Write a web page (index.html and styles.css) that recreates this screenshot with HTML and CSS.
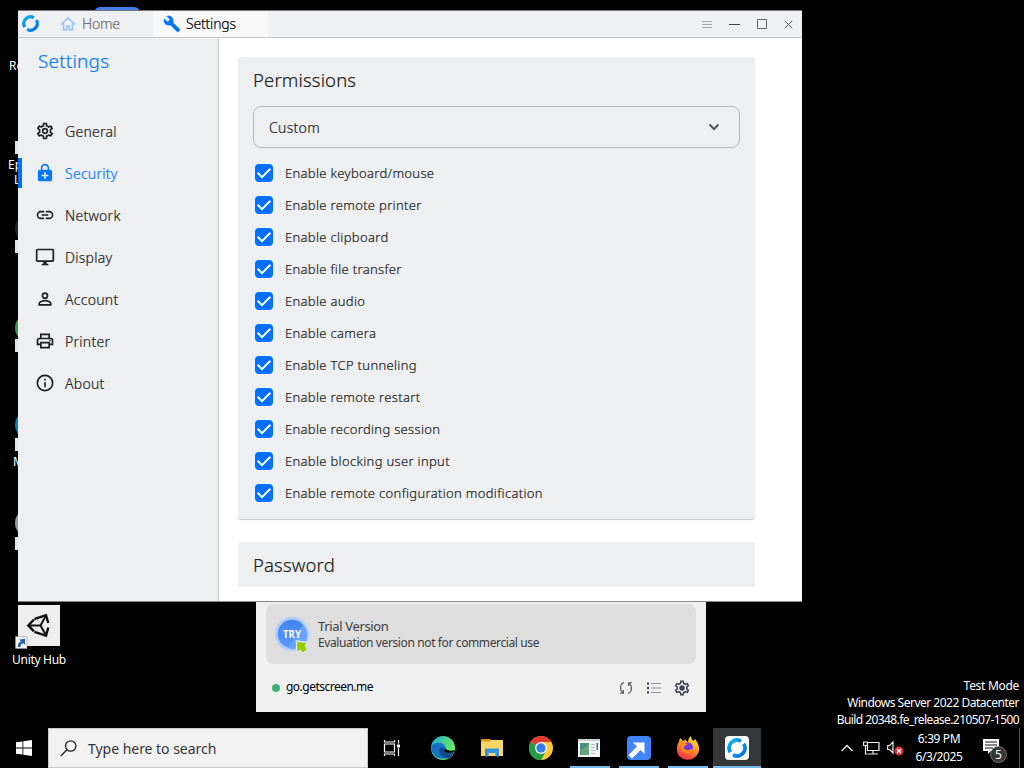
FILE: index.html
```html
<!DOCTYPE html>
<html lang="en">
<head>
<meta charset="utf-8">
<title>Settings</title>
<link rel="stylesheet" href="styles.css">
</head>
<body>
<svg class="defs" width="0" height="0" aria-hidden="true">
  <defs>
    <linearGradient id="ring" x1="0" y1="0" x2="1" y2="1"><stop offset="0" stop-color="#00bde9"/><stop offset="1" stop-color="#0866e5"/></linearGradient>
    <linearGradient id="tryfill" x1="0" y1="0" x2="0" y2="1"><stop offset="0" stop-color="#4084ed"/><stop offset="1" stop-color="#5b9aff"/></linearGradient>
    <linearGradient id="edge" x1="0" y1="0" x2="1" y2=".4"><stop offset="0" stop-color="#20a9df"/><stop offset="1" stop-color="#6bea5b"/></linearGradient>
    <linearGradient id="fox" x1=".8" y1="0" x2=".3" y2="1"><stop offset="0" stop-color="#fff044"/><stop offset=".45" stop-color="#ff9a1e"/><stop offset="1" stop-color="#f5264f"/></linearGradient>
    <symbol id="rust" viewBox="0 0 24 24"><g fill="none" stroke="url(#ring)" stroke-width="4.400"><path d="M3.400 16.200A9.600 9.600 0 0 1 16 3.300"/><path d="M20.600 7.800A9.600 9.600 0 0 1 8 20.700"/></g><path d="M14.500 1.500 18 2 15 6.500ZM1.500 14.500 2 18.500 6.500 15ZM22.500 9.500 22 5.500 17.500 9ZM9.500 22.500 6 22 9 17.500Z" fill="#078bea"/></symbol>
    <symbol id="check" viewBox="0 0 18 18"><path d="M2.600 8.800 7 13.100 15.400 4.700" fill="none" stroke="#fff" stroke-width="2"/></symbol>
    <symbol id="gear" viewBox="0 0 24 24"><path d="M19.43 12.98c.04-.32.07-.64.07-.98s-.03-.66-.07-.98l2.11-1.65c.19-.15.24-.42.12-.64l-2-3.46a.5.5 0 0 0-.61-.22l-2.49 1c-.52-.4-1.08-.73-1.69-.98l-.38-2.65A.49.49 0 0 0 14 2h-4c-.25 0-.46.18-.49.42l-.38 2.65c-.61.25-1.17.59-1.69.98l-2.49-1a.5.5 0 0 0-.61.22l-2 3.46c-.13.22-.07.49.12.64l2.11 1.65c-.04.32-.07.65-.07.98s.03.66.07.98l-2.11 1.65c-.19.15-.24.42-.12.64l2 3.46c.12.22.39.3.61.22l2.49-1c.52.4 1.08.73 1.69.98l.38 2.65c.03.24.24.42.49.42h4c.25 0 .46-.18.49-.42l.38-2.65c.61-.25 1.17-.59 1.69-.98l2.49 1c.23.09.49 0 .61-.22l2-3.46c.12-.22.07-.49-.12-.64zM17.45 11.27c.04.31.05.52.05.73s-.02.43-.05.73l-.14 1.13.89.7 1.08.84-.7 1.21-1.27-.51-1.04-.42-.9.68c-.43.32-.84.56-1.25.73l-1.06.43-.16 1.13-.2 1.35h-1.4l-.35-2.48-1.06-.43c-.43-.18-.83-.41-1.23-.71l-.91-.7-1.06.43-1.27.51-.7-1.21 1.97-1.54-.14-1.13a7 7 0 0 1 0-1.47l.14-1.13-1.97-1.54.7-1.21 1.27.51 1.04.42.9-.68c.43-.32.84-.56 1.25-.73l1.06-.43.35-2.48h1.39l.35 2.48 1.06.43c.43.18.83.41 1.23.71l.91.7 1.06-.43 1.27-.51.7 1.21-1.97 1.54z" fill="currentColor" fill-rule="evenodd"/></symbol>
  </defs>
</svg>
<main class="desktop">
  <div class="back-tab"></div>
  <span class="peek p1">Re</span>
  <span class="peek p2">Ep</span>
  <span class="peek p3">L</span>
  <span class="peek p4">M</span>
  <i class="bar b1"></i><i class="bar b2"></i><i class="bar b3"></i><i class="bar b4"></i><i class="bar b5"></i>
  <i class="disc d1"></i><i class="disc d2"></i><i class="disc d3"></i><i class="disc d4"></i>

  <div class="shortcut">
    <svg width="60" height="46" viewBox="0 0 60 46"><path fill="#eee" d="M9 2h42v41H9z"/><g fill="none" stroke="#111" stroke-width="2.400"><path d="M25.500 16 37 12.200 39.300 20M39.300 24.500 37 32.600 25.500 28.800M25 16.500 19.300 22.400 25 28.300"/><path d="M19.500 22.400H31.500L37 12.500M31.500 22.400 37 32.300" stroke-width="2"/></g><path fill="#f3f3f3" stroke="#999" stroke-width=".6" d="M6.500 33.500h11.500v12H6.500z"/><path d="M9 44c-.5-3 .5-5 3-5.600l-1.600-2 5.600-.6v6l-1.800-1.600c-2 .5-3 1.800-2.500 3.800z" fill="#2860ae"/></svg>
    <span>Unity Hub</span>
  </div>

  <section class="trial">
    <div class="trial-card">
      <svg width="36" height="40" viewBox="0 0 36 40"><circle cx="17" cy="19" r="17" fill="#b0ccfb"/><circle cx="17" cy="19" r="14.200" fill="url(#tryfill)"/><path d="M13 33 28 10A14 14 0 0 1 13 33" fill="#6ba2fb"/><text class="try" x="17" y="23" text-anchor="middle" textLength="18" lengthAdjust="spacingAndGlyphs">TRY</text><path d="m21.500 26 11 1.500-2 3 2 4.500-5 3.500-2-3-4 1.500z" fill="#94cf05" stroke="#dfe9ef" stroke-width="1.300"/></svg>
      <div><p class="t1">Trial Version</p><p class="t2">Evaluation version not for commercial use</p></div>
    </div>
    <div class="trial-foot">
      <i class="online"></i><span class="host">go.getscreen.me</span>
      <svg class="f-sync" width="14" height="14" viewBox="0 0 14 14" fill="none" stroke="#555" stroke-width="1.100"><path d="M5 1.500C1 3 .2 8.500 4 12M1 12.300h3.400V9M9 12.500c4-1.500 4.800-7 1-10.500M13 1.700H9.600V5"/></svg>
      <svg width="14" height="12" viewBox="0 0 14 12" stroke="#8a8e99" stroke-width="1.200"><path d="M0 1.500h2M0 6h2M0 10.500h2" stroke="#34384a" stroke-width="2"/><path d="M4 1.500h10M4 6h10M4 10.500h10"/></svg>
      <svg width="18" height="18" viewBox="0 0 24 24" color="#3d4355"><use href="#gear"/><circle cx="12" cy="12" r="3.600" fill="#3d4355"/></svg>
    </div>
  </section>

  <section class="window">
    <header class="titlebar">
      <svg class="logo" width="17" height="17"><use href="#rust"/></svg>
      <div class="tab home"><svg width="16" height="16" viewBox="0 0 16 16" fill="none" stroke="#9dc7f5" stroke-width="1.700"><path d="M1 8.500 8 2l7 6.500M3.500 7v7h3.200v-4h2.600v4h3.200V7"/></svg><span>Home</span></div>
      <div class="tab active"><svg width="18" height="18" viewBox="0 0 24 24"><path fill="#0878f9" d="m22.700 19-9.100-9.100c.9-2.300.4-5-1.500-6.900-2-2-5-2.400-7.400-1.300L9 6 6 9 1.600 4.700C.4 7.100.9 10.100 2.900 12.100c1.900 1.900 4.600 2.400 6.900 1.500l9.100 9.100c.4.400 1 .4 1.400 0l2.300-2.300c.5-.4.5-1.100.1-1.400z"/></svg><span>Settings</span></div>
      <div class="controls">
        <svg width="10" height="10" viewBox="0 0 10 10" stroke="#aaa"><path d="M0 2.500h10M0 5.500h10M0 8.500h10"/></svg>
        <svg width="11" height="10" viewBox="0 0 11 10" stroke="#444"><path d="M0 5.500h11"/></svg>
        <svg width="10" height="10" viewBox="0 0 10 10" stroke="#666" fill="none"><path d="M.5.500h9v9h-9z"/></svg>
        <svg width="9" height="9" viewBox="0 0 9 9" stroke="#555"><path d="m.8.800 7.400 7.400m0-7.400L.8 8.200"/></svg>
      </div>
    </header>
    <div class="body">
      <nav class="side">
        <h1>Settings</h1>
        <a class="item"><svg viewBox="0 0 24 24"><use href="#gear"/><circle cx="12" cy="12" r="2.800" fill="none" stroke="currentColor" stroke-width="2"/></svg><span>General</span></a>
        <a class="item on"><svg viewBox="0 0 24 24"><path fill="currentColor" fill-rule="evenodd" d="M18.500 8H17V6A5 5 0 0 0 7 6v2H5.500a2 2 0 0 0-2 2v10c0 1.100.9 2 2 2h13a2 2 0 0 0 2-2V10a2 2 0 0 0-2-2zM8.900 6a3.100 3.100 0 0 1 6.200 0v2H8.900zM16 16h-3v3h-2v-3H8v-2h3v-3h2v3h3z"/></svg><span>Security</span></a>
        <a class="item"><svg viewBox="0 0 24 24"><path fill="currentColor" d="M3.900 12A3.100 3.100 0 0 1 7 8.900h4V7H7a5 5 0 0 0 0 10h4v-1.900H7A3.100 3.100 0 0 1 3.900 12zM8 13h8v-2H8zm9-6h-4v1.900h4a3.100 3.100 0 0 1 0 6.200h-4V17h4a5 5 0 0 0 0-10z"/></svg><span>Network</span></a>
        <a class="item"><svg viewBox="0 0 24 24"><path fill="currentColor" fill-rule="evenodd" d="M21 2H3a2 2 0 0 0-2 2v12c0 1.100.9 2 2 2h7v2H8v2h8v-2h-2v-2h7a2 2 0 0 0 2-2V4a2 2 0 0 0-2-2zm0 14H3V4h18z"/></svg><span>Display</span></a>
        <a class="item"><svg viewBox="0 0 24 24" fill="none" stroke="currentColor" stroke-width="2"><circle cx="12" cy="8" r="3"/><path d="M5 19v-1.500c0-2 4-3.500 7-3.500s7 1.500 7 3.500V19z"/></svg><span>Account</span></a>
        <a class="item"><svg viewBox="0 0 24 24"><path fill="currentColor" fill-rule="evenodd" d="M19 8h-1V3H6v5H5a3 3 0 0 0-3 3v6h4v4h12v-4h4v-6a3 3 0 0 0-3-3zM8 5h8v3H8zm8 14H8v-4h8zm2-4v-2H6v2H4v-4a1 1 0 0 1 1-1h14a1 1 0 0 1 1 1v4z"/><circle cx="18" cy="11.500" r="1" fill="currentColor"/></svg><span>Printer</span></a>
        <a class="item"><svg viewBox="0 0 24 24"><circle cx="12" cy="12" r="9.200" fill="none" stroke="currentColor" stroke-width="2"/><path fill="currentColor" d="M11 7h2v2h-2zm0 4h2v6h-2z"/></svg><span>About</span></a>
      </nav>
      <div class="content">
        <div class="card">
          <h2>Permissions</h2>
          <div class="select"><span>Custom</span><svg width="12" height="8" viewBox="0 0 12 8"><path d="m1.500 1.500 4.500 4.500 4.500-4.500" fill="none" stroke="#55585b" stroke-width="2"/></svg></div>
          <div class="options">
            <label><svg class="box"><use href="#check"/></svg><span>Enable keyboard/mouse</span></label>
            <label><svg class="box"><use href="#check"/></svg><span>Enable remote printer</span></label>
            <label><svg class="box"><use href="#check"/></svg><span>Enable clipboard</span></label>
            <label><svg class="box"><use href="#check"/></svg><span>Enable file transfer</span></label>
            <label><svg class="box"><use href="#check"/></svg><span>Enable audio</span></label>
            <label><svg class="box"><use href="#check"/></svg><span>Enable camera</span></label>
            <label><svg class="box"><use href="#check"/></svg><span>Enable TCP tunneling</span></label>
            <label><svg class="box"><use href="#check"/></svg><span>Enable remote restart</span></label>
            <label><svg class="box"><use href="#check"/></svg><span>Enable recording session</span></label>
            <label><svg class="box"><use href="#check"/></svg><span>Enable blocking user input</span></label>
            <label><svg class="box"><use href="#check"/></svg><span>Enable remote configuration modification</span></label>
          </div>
        </div>
        <div class="card second"><h2>Password</h2></div>
      </div>
    </div>
  </section>

  <div class="watermark"><p class="w1">Test Mode</p><p class="w2">Windows Server 2022 Datacenter</p><p class="w3">Build 20348.fe_release.210507-1500</p></div>

  <footer class="taskbar">
    <div class="start"><svg width="16" height="16" viewBox="0 0 16 16"><path fill="#fff" d="M0 2.300 6.500 1.400v6.200H0zM7.300 1.300 16 0v7.600H7.300zM0 8.400h6.500v6.200L0 13.700zM7.300 8.400H16V16l-8.700-1.300z"/></svg></div>
    <div class="search"><svg width="17" height="17" viewBox="0 0 17 17" fill="none" stroke="#222" stroke-width="1.300"><circle cx="10.700" cy="6" r="5.200"/><path d="M7 9.700.7 16"/></svg><span>Type here to search</span></div>
    <div class="app view"><svg width="18" height="16" viewBox="0 0 18 16" fill="none" stroke="#fff" stroke-width="1.200"><path d="M1.500 4h10v8h-10zM1.500 0v2h10V0M1.500 16v-2h10v2M15.500 0v3.500M15.500 8v8"/><path fill="#fff" stroke="none" d="M14 4.500h3v3h-3z"/></svg></div>
    <div class="app"><svg width="24" height="24" viewBox="0 0 24 24"><circle cx="12" cy="12" r="12" fill="url(#edge)"/><path d="M.2 11C2 6 12 5 14.500 11c.5 2-2 3-1 4.500 2 2.500 6.500 2 9.500.5A12 12 0 0 1 .2 11" fill="#1672c4"/><path d="M8.500 13c-1 5 3.500 9.500 9 9.500A12 12 0 0 0 23 16c-6 3-11 0-9.500-3-2-2.500-4-2-5 0" fill="#114a8b"/><path d="M13.500 11.500c1.300 1.500-1 2.500 0 4 1.700 2 6 2 9.500.5l.8-2c-3 1.300-8 1-10.300-2.500" fill="#02070c"/></svg></div>
    <div class="app"><svg width="22" height="18" viewBox="0 0 22 18"><path d="M0 0h9l1 1h12v16H0z" fill="#fbd669"/><path d="M0 0h9l1.500 2.500H0z" fill="#dc9a18"/><path d="M4 17.500V9.500h14v8h-3.500V14h-7v3.500z" fill="#3595dc"/></svg></div>
    <div class="app"><svg width="24" height="24" viewBox="0 0 24 24"><circle cx="12" cy="12" r="12" fill="#fcc934"/><path d="M12 12 1.600 6A12 12 0 0 1 22.400 6H12z" fill="#e33b2e"/><path d="M1.600 6A12 12 0 0 0 12 24l5.200-9L12 12z" fill="#259b48"/><circle cx="12" cy="12" r="6" fill="#fff"/><circle cx="12" cy="12" r="4.700" fill="#347ce8"/></svg></div>
    <div class="app run"><svg class="server" width="22" height="18" viewBox="0 0 22 18"><path fill="#f5f5f5" d="M0 0h22v18H0z"/><path d="M0 0h22v2H0z" fill="#ccd0d2"/><path d="M2 4h9v12H2z" fill="#468f7d"/><path d="M3 10c5 0 6-5 8-5v11H3z" fill="#66a67a"/><path d="M13 5.500h4M13 8.500h4M13 11.500h4M13 14.500h4" stroke="#bbb"/><path d="M18.500 4H20v7h-1.500z" fill="#237e9e"/></svg></div>
    <div class="app run"><svg width="24" height="24" viewBox="0 0 24 24"><rect width="24" height="24" rx="4" fill="#4285f8"/><path d="M6 6.500h11.500V18l-4-4L5 22.500 1.500 19 10 10.500z" fill="#fff"/></svg></div>
    <div class="app run"><svg width="24" height="24" viewBox="0 0 24 24"><path d="M3 6C3 4 4 2.500 4.500 2l2.500 3 3-1.500C10 5 11 6 12 6c0-2 1-4.500 3-6 0 2.500 1 3.500 2.500 5L19 3c4 5 6 11 2 16-5 7-15 6-19-.5C0 14 1 8 3 6" fill="url(#fox)"/><circle cx="12" cy="11.500" r="5" fill="#713bd0"/><path d="M3 6c4-2 6 1 8 2 0 2-4 1-3 4s6 3 8 0c1 7-10 7-11 0z" fill="#ff8820"/></svg></div>
    <div class="app run current"><span><svg width="20" height="20"><use href="#rust"/></svg></span></div>
    <div class="tray">
      <svg width="12" height="8" viewBox="0 0 12 8" fill="none" stroke="#eee" stroke-width="1.400"><path d="m.6 7 5.400-5.400L11.400 7"/></svg>
      <svg class="net" width="17" height="14" viewBox="0 0 17 14" fill="none" stroke="#eee" stroke-width="1.200"><path d="M5 1.500h11v8H4.500V4M10 9.500v3M5 13h10M.6 1h3.800v3.500H.6zM2.500 4.500V13h2"/></svg>
      <svg class="vol" width="17" height="16" viewBox="0 0 17 16"><path d="M.7 5.500h2L6 2v11L2.700 9.500h-2z" fill="none" stroke="#eee" stroke-width="1.200"/><circle cx="12" cy="11" r="4.500" fill="#d7323a"/><path d="m10 9 4 4m0-4-4 4" stroke="#fff" stroke-width="1.100"/></svg>
      <div class="clock"><span class="time">6:39 PM</span><span class="date">6/3/2025</span></div>
      <svg class="note" width="26" height="26" viewBox="0 0 26 26"><path d="M1 1h16v12H9l-3 3v-3H1z" fill="#fff"/><path d="M3 4h12M3 7h12M3 10h8" stroke="#111" stroke-width="1.200"/><circle cx="16.500" cy="16.500" r="8" fill="#353535" stroke="#888" stroke-width=".8"/><text class="count" x="16.500" y="21" text-anchor="middle">5</text></svg>
    </div>
  </footer>
</main>
</body>
</html>
```
FILE: styles.css
```css
* { box-sizing: border-box; }
body { margin: 0; background: #000; font-family: "Noto Sans", "Open Sans", sans-serif; }
h1, h2, p { margin: 0; font-weight: inherit; }
svg { display: block; flex: none; }
span, p, h1, h2 { white-space: nowrap; }
.defs { position: absolute; }
.desktop { position: relative; width: 1024px; height: 768px; overflow: hidden; background: #000; }

/* Desktop items that show beside the window's left edge */
.back-tab { position: absolute; left: 94px; top: 7px; width: 46px; height: 12px; border-radius: 7px; background: #3f80ee; }
.peek { position: absolute; color: #fff; font-size: 12px; line-height: 14px; }
.p1 { left: 9px; top: 59px; }
.p2 { left: 8px; top: 158px; }
.p3 { left: 14px; top: 173px; }
.p4 { left: 13px; top: 455px; }
.bar { position: absolute; left: 15px; width: 4px; height: 13px; background: #e4e4e4; }
.b1 { top: 141px; } .b2 { top: 240px; } .b3 { top: 339px; } .b4 { top: 438px; } .b5 { top: 537px; }
.disc { position: absolute; left: 15px; width: 28px; height: 28px; border-radius: 50%; }
.d1 { top: 215px; background: #222; } .d2 { top: 314px; background: #35994b; } .d3 { top: 411px; background: #0c78bd; } .d4 { top: 509px; background: #999; }
.shortcut { position: absolute; left: 9px; top: 603px; width: 60px; display: flex; flex-direction: column; align-items: center; color: #fff; font-size: 12px; line-height: 20px; }
.shortcut span { margin-top: 1px; letter-spacing: -.3px; }

/* Trial window */
.trial { position: absolute; left: 256px; top: 600px; width: 450px; height: 112px; padding: 4px 10px 0; background: #f0f0f0; }
.trial-card { display: flex; gap: 7px; align-items: center; height: 60px; padding: 0 9px; border-radius: 8px; background: #dedede; color: #3c3c3c; }
.trial-card svg { margin-top: 2px; }
.t1 { font-size: 13px; line-height: 17px; letter-spacing: -.35px; }
.t2 { font-size: 12px; line-height: 16px; letter-spacing: -.38px; }
.try { fill: #fff; font: 700 11px "Open Sans", sans-serif; }
.trial-foot { display: flex; align-items: center; height: 48px; padding: 0 5px 0 6px; font-size: 12px; }
.online { width: 8px; height: 8px; border-radius: 50%; background: #3cb371; margin-right: 6px; }
.host { color: #000; line-height: 16px; margin-top: -3px; margin-right: auto; letter-spacing: -.52px; }
.trial-foot svg { margin-top: 0; }
.trial-foot svg + svg { margin-left: 12px; }
.trial-foot .f-sync + svg { margin-left: 14px; }

/* Settings window */
.window { position: absolute; left: 18px; top: 10px; width: 784px; height: 592px; border-top: 1px solid #777; border-bottom: 1px solid #888; background: #fff; overflow: hidden; font-weight: 300; -webkit-text-stroke: .2px currentColor; }
.titlebar { display: flex; height: 27px; background: #eff0f2; border-bottom: 1px solid #c6c7c9; }
.logo { margin: 4px 0 0 4px; width: 17px; }
.tab { display: flex; align-items: center; height: 26px; font-size: 14px; }
.tab span { line-height: 18px; margin-top: -1px; }
.home { width: 96px; margin-left: 13px; padding-left: 8px; gap: 6px; color: #6d6d6d; }
.home span { letter-spacing: -.2px; }
.active { width: 115px; margin-left: 5px; padding-left: 10px; gap: 5px; background: #f8f8f9; color: #000; }
.active span { letter-spacing: -.2px; }
.controls { display: flex; align-items: center; gap: 17px; margin-left: auto; padding-right: 9px; }
.body { display: flex; height: 563px; }
.side { width: 201px; background: #eeeff1; border-right: 1px solid #c9cacd; color: #1c1e20; }
.side h1 { height: 72px; padding: 9px 0 0 20px; color: #0877f3; font-size: 19px; line-height: 28px; letter-spacing: .18px; }
.item { display: flex; align-items: center; height: 42px; padding-left: 17px; gap: 10px; font-size: 14px; letter-spacing: .27px; }
.item svg { width: 20px; height: 20px; }
.on { padding-left: 13px; color: #0877f3; }
.on::before { content: ""; width: 4px; height: 30px; margin-left: -13px; background: #0071ff; }
.on svg { margin-left: 3px; }
.content { flex: 1; padding: 19px 47px 0 19px; }
.card { height: 462px; padding: 9px 15px 0; border-radius: 4px; background: #eeeff1; box-shadow: 0 1px 1px #c6c6c6; }
.card h2 { color: #1c1e20; font-size: 18.500px; line-height: 28px; letter-spacing: .15px; }
.second { height: 45px; margin-top: 23px; border-radius: 4px 4px 0 0; box-shadow: none; }
.select { display: flex; align-items: center; justify-content: space-between; height: 42px; margin-top: 12px; padding: 0 19px 0 15px; border: 1px solid #b8b9bd; border-radius: 8px; color: #1c1e20; font-size: 14px; letter-spacing: .3px; }
.options { margin-top: 9px; }
.options label { display: flex; align-items: center; height: 32px; padding-left: 2px; gap: 12px; color: #1c1e20; font-size: 13px; letter-spacing: .32px; }
.box { width: 18px; height: 18px; border-radius: 4px; background: #0071ff; }

.watermark { position: absolute; right: 5px; top: 677px; color: #fff; text-align: right; font-size: 12px; line-height: 17px; }
.w1 { letter-spacing: -.3px; }
.w2 { letter-spacing: -.5px; }
.w3 { letter-spacing: -.58px; }

/* Taskbar */
.taskbar { position: absolute; left: 0; top: 728px; width: 1024px; height: 40px; display: flex; background: #010101; }
.start { width: 48px; display: grid; place-items: center; }
.search { width: 320px; display: flex; align-items: center; gap: 11px; padding-left: 11px; border: 1px solid #c9c9c9; background: #f2f2f2; color: #333; font-size: 14px; letter-spacing: -.03px; }
.app { width: 40px; margin: 0 4px 0 5px; height: 40px; display: grid; place-items: center; }
.view { margin-left: 4px; margin-right: 6px; }
.run { border-bottom: 2px solid #76b9ed; padding-top: 2px; }
.server { margin-right: 2px; }
.current { width: 48px; margin: 0 0 0 1px; background: #353637; }
.current span { width: 24px; height: 24px; display: grid; place-items: center; border-radius: 4px; background: #fff; }
.tray { display: flex; align-items: center; margin-left: auto; padding-right: 4px; position: relative; width: 183px; }
.net { margin-left: 10px; }
.vol { margin-left: 7px; }
.clock { display: flex; flex-direction: column; align-items: center; width: 64px; margin-left: 3px; color: #fff; font-size: 12px; line-height: 18px; }
.clock span { letter-spacing: -.4px; }
.note { margin: 6px 0 0 11px; }
.count { fill: #fff; font: 12px "Noto Sans", sans-serif; }
.tray::after { content: ""; position: absolute; right: 4px; top: 0; width: 1px; height: 40px; background: #555; }
```
